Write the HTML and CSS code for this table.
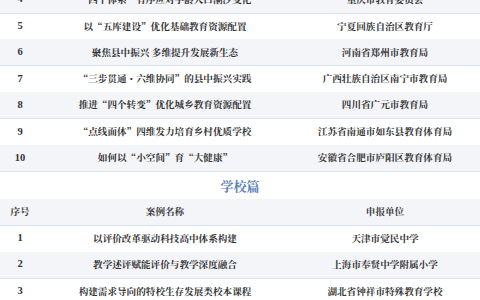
FILE: index.html
```html
<!DOCTYPE html>
<html lang="zh-CN">
<head>
<meta charset="utf-8">
<title>案例名单</title>
<link rel="stylesheet" href="styles.css">
</head>
<body>
<div class="page">
  <table class="cases cases-top">
    <colgroup><col class="c-no"><col class="c-name"><col class="c-unit"></colgroup>
    <tbody>
      <tr class="alt"><td class="no">4</td><td>“四个体系”有序应对学龄人口潮汐变化</td><td>重庆市教育委员会</td></tr>
      <tr><td class="no">5</td><td>以“五库建设”优化基础教育资源配置</td><td>宁夏回族自治区教育厅</td></tr>
      <tr class="alt"><td class="no">6</td><td>聚焦县中振兴 多维提升发展新生态</td><td>河南省郑州市教育局</td></tr>
      <tr><td class="no">7</td><td>“三步贯通・六维协同”的县中振兴实践</td><td>广西壮族自治区南宁市教育局</td></tr>
      <tr class="alt"><td class="no">8</td><td>推进“四个转变”优化城乡教育资源配置</td><td>四川省广元市教育局</td></tr>
      <tr><td class="no">9</td><td>“点线面体”四维发力培育乡村优质学校</td><td>江苏省南通市如东县教育体育局</td></tr>
      <tr class="alt"><td class="no">10</td><td>如何以“小空间”育“大健康”</td><td>安徽省合肥市庐阳区教育体育局</td></tr>
    </tbody>
  </table>

  <h2 class="section-title">学校篇</h2>

  <table class="cases">
    <colgroup><col class="c-no"><col class="c-name"><col class="c-unit"></colgroup>
    <thead>
      <tr class="alt"><th>序号</th><th>案例名称</th><th>申报单位</th></tr>
    </thead>
    <tbody>
      <tr><td class="no">1</td><td>以评价改革驱动科技高中体系构建</td><td>天津市觉民中学</td></tr>
      <tr class="alt"><td class="no">2</td><td>教学述评赋能评价与教学深度融合</td><td>上海市奉贤中学附属小学</td></tr>
      <tr><td class="no">3</td><td>构建需求导向的特校生存发展类校本课程</td><td>湖北省钟祥市特殊教育学校</td></tr>
    </tbody>
  </table>
</div>
</body>
</html>
```

FILE: styles.css
```css
html, body {
  margin: 0;
  padding: 0;
  background: #ffffff;
}

body {
  width: 480px;
  height: 300px;
  overflow: hidden;
  font-family: "Noto Serif CJK SC", "Noto Sans CJK SC", serif;
  color: #333333;
}

.page {
  margin-top: -13.4px;
}

.cases {
  width: 480px;
  border-collapse: collapse;
  table-layout: fixed;
}

.c-no { width: 40px; }
.c-name { width: 250px; }
.c-unit { width: 190px; }

.cases td,
.cases th {
  height: 26.4px;
  padding: 0;
  text-align: center;
  vertical-align: middle;
  font-size: 9.6px;
  font-weight: 700;
  line-height: 1;
  white-space: nowrap;
  box-sizing: border-box;
}

.cases th {
  color: #3a3a3a;
}

.cases .no {
  font-family: "Liberation Serif", "Noto Serif CJK SC", serif;
  font-size: 10.5px;
}

.cases tr.alt td,
.cases tr.alt th {
  background: #f3f5f9;
  border-bottom: 1px solid #dde3ec;
}

.section-title {
  margin: 0;
  height: 27px;
  display: flex;
  align-items: center;
  justify-content: center;
  font-size: 13px;
  font-weight: 700;
  color: #5b80c0;
  letter-spacing: 0;
}
```
